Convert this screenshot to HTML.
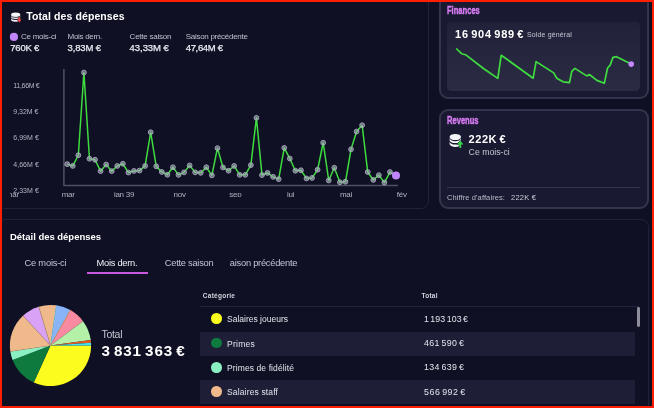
<!DOCTYPE html>
<html lang="fr"><head><meta charset="utf-8"><title>Finances</title>
<style>
html,body{margin:0;padding:0;}
body{width:654px;height:408px;overflow:hidden;background:#0f1024;position:relative;font-family:"Liberation Sans",Arial,sans-serif;}
.card{position:absolute;box-sizing:border-box;border:1px solid #212239;border-radius:8px;background:#0f1024;}
.rc{position:absolute;box-sizing:border-box;border:2px solid #34354d;border-radius:9px;background:#191a31;}
.t{position:absolute;height:20px;line-height:20px;white-space:nowrap;}
.cond{position:absolute;height:20px;line-height:20px;white-space:nowrap;font-weight:700;color:#d87cf3;transform-origin:0 50%;-webkit-text-stroke:.45px #d87cf3;}
.frame{position:absolute;left:0;top:0;width:654px;height:408px;box-sizing:border-box;border:2px solid #ff1e00;z-index:10;}
svg{position:absolute;left:0;top:0;}
.xl{top:-1.35px;font-size:8px;letter-spacing:-.25px;color:#b2b2c0;}
.row{position:absolute;left:200px;width:435px;height:24.2px;background:#1e1f36;}
.dot{position:absolute;width:10.6px;height:10.6px;border-radius:50%;left:211.1px;}
</style></head><body>
<div class="card" style="left:-3px;top:-6px;width:431.5px;height:214.5px;"></div>
<div class="card" style="left:-3px;top:219px;width:651.5px;height:200px;"></div>
<div class="rc" style="left:439px;top:-6px;width:209.5px;height:105px;"></div>
<div class="rc" style="left:439px;top:109px;width:209.5px;height:99.5px;"></div>
<div style="position:absolute;left:447px;top:22.3px;width:193.2px;height:69px;border-radius:4.5px;background:linear-gradient(180deg,#212239,#2b2c44);"></div>
<div style="position:absolute;left:447px;top:186.5px;width:193px;height:1px;background:#35364e;"></div>
<div style="position:absolute;left:200px;top:306px;width:439px;height:1px;background:#23243c;"></div>
<div class="row" style="top:331.5px"></div>
<div class="row" style="top:379.9px"></div>
<div style="position:absolute;left:86.7px;top:272px;width:61.2px;height:2px;background:#c858de;"></div>
<div style="position:absolute;left:636.8px;top:307.2px;width:2.8px;height:19.5px;border-radius:1.4px;background:#8d8d9b;"></div>
<div class="dot" style="top:313.4px;background:#fcfc1e"></div>
<div class="dot" style="top:337.9px;background:#0f7a3e"></div>
<div class="dot" style="top:362px;background:#8af0c2"></div>
<div class="dot" style="top:386.2px;background:#f0b98c"></div>
<div style="position:absolute;left:230px;top:253px;width:80px;height:20px;overflow:hidden;will-change:transform;"><span class="t" id="clipt" style="right:12.8px;top:0;font-size:9.3px;color:#c4c4d4;letter-spacing:-.25px;">Saison précédente</span></div>
<div style="position:absolute;left:0;top:186px;width:430px;height:11.45px;overflow:hidden;will-change:transform;" id="xl">
<span class="t xl" style="left:61.7px;">mar</span>
<span class="t xl" style="left:113.9px;">jan 39</span>
<span class="t xl" style="left:173.6px;">nov</span>
<span class="t xl" style="left:229.2px;">sep</span>
<span class="t xl" style="left:287px;">jui</span>
<span class="t xl" style="left:339.9px;">mai</span>
<span class="t xl" style="left:396.8px;">fév</span>
<span class="t xl" style="left:5.8px;">mar</span>
<div style="position:absolute;left:0;top:0;width:10.2px;height:20px;background:#0f1024"></div>
</div>
<svg width="654" height="408" viewBox="0 0 654 408">
<path d="M63.9,69V185.4H398" fill="none" stroke="#50505f" stroke-width="1.5"/>
<polyline points="67.2,164.15 72.77,165.95 78.33,155.25 83.9,72.55 89.46,158.75 95.03,159.75 100.59,171.15 106.16,164.55 111.72,171.15 117.28,165.95 122.85,163.75 128.42,172.55 133.98,170.95 139.55,170.55 145.11,165.95 150.68,132.25 156.24,166.35 161.81,171.95 167.37,174.75 172.94,167.25 178.5,174.85 184.06,172.35 189.63,165.45 195.19,172.35 200.76,172.85 206.32,167.25 211.89,175.35 217.46,148.15 223.02,167.45 228.59,170.75 234.15,165.95 239.72,174.85 245.28,174.85 250.85,165.15 256.41,117.85 261.98,175.05 267.54,172.95 273.11,176.85 278.67,179.15 284.24,147.85 289.8,158.55 295.37,170.75 300.93,170.25 306.5,178.45 312.06,177.95 317.62,169.75 323.19,142.75 328.75,180.45 334.32,167.75 339.88,182.25 345.45,181.75 351.01,149.35 356.58,131.55 362.14,125.25 367.71,172.05 373.28,179.95 378.84,175.15 384.41,182.55 389.97,172.05 396,175.4" fill="none" stroke="#3fdc3f" stroke-width="1.5" stroke-linejoin="round"/>
<g fill="#b4b4c8" fill-opacity=".55" stroke="#a6a6ba" stroke-width="1" stroke-opacity=".95"><circle cx="67.2" cy="164.15" r="2.4"/><circle cx="72.77" cy="165.95" r="2.4"/><circle cx="78.33" cy="155.25" r="2.4"/><circle cx="83.9" cy="72.55" r="2.4"/><circle cx="89.46" cy="158.75" r="2.4"/><circle cx="95.03" cy="159.75" r="2.4"/><circle cx="100.59" cy="171.15" r="2.4"/><circle cx="106.16" cy="164.55" r="2.4"/><circle cx="111.72" cy="171.15" r="2.4"/><circle cx="117.28" cy="165.95" r="2.4"/><circle cx="122.85" cy="163.75" r="2.4"/><circle cx="128.42" cy="172.55" r="2.4"/><circle cx="133.98" cy="170.95" r="2.4"/><circle cx="139.55" cy="170.55" r="2.4"/><circle cx="145.11" cy="165.95" r="2.4"/><circle cx="150.68" cy="132.25" r="2.4"/><circle cx="156.24" cy="166.35" r="2.4"/><circle cx="161.81" cy="171.95" r="2.4"/><circle cx="167.37" cy="174.75" r="2.4"/><circle cx="172.94" cy="167.25" r="2.4"/><circle cx="178.5" cy="174.85" r="2.4"/><circle cx="184.06" cy="172.35" r="2.4"/><circle cx="189.63" cy="165.45" r="2.4"/><circle cx="195.19" cy="172.35" r="2.4"/><circle cx="200.76" cy="172.85" r="2.4"/><circle cx="206.32" cy="167.25" r="2.4"/><circle cx="211.89" cy="175.35" r="2.4"/><circle cx="217.46" cy="148.15" r="2.4"/><circle cx="223.02" cy="167.45" r="2.4"/><circle cx="228.59" cy="170.75" r="2.4"/><circle cx="234.15" cy="165.95" r="2.4"/><circle cx="239.72" cy="174.85" r="2.4"/><circle cx="245.28" cy="174.85" r="2.4"/><circle cx="250.85" cy="165.15" r="2.4"/><circle cx="256.41" cy="117.85" r="2.4"/><circle cx="261.98" cy="175.05" r="2.4"/><circle cx="267.54" cy="172.95" r="2.4"/><circle cx="273.11" cy="176.85" r="2.4"/><circle cx="278.67" cy="179.15" r="2.4"/><circle cx="284.24" cy="147.85" r="2.4"/><circle cx="289.8" cy="158.55" r="2.4"/><circle cx="295.37" cy="170.75" r="2.4"/><circle cx="300.93" cy="170.25" r="2.4"/><circle cx="306.5" cy="178.45" r="2.4"/><circle cx="312.06" cy="177.95" r="2.4"/><circle cx="317.62" cy="169.75" r="2.4"/><circle cx="323.19" cy="142.75" r="2.4"/><circle cx="328.75" cy="180.45" r="2.4"/><circle cx="334.32" cy="167.75" r="2.4"/><circle cx="339.88" cy="182.25" r="2.4"/><circle cx="345.45" cy="181.75" r="2.4"/><circle cx="351.01" cy="149.35" r="2.4"/><circle cx="356.58" cy="131.55" r="2.4"/><circle cx="362.14" cy="125.25" r="2.4"/><circle cx="367.71" cy="172.05" r="2.4"/><circle cx="373.28" cy="179.95" r="2.4"/><circle cx="378.84" cy="175.15" r="2.4"/><circle cx="384.41" cy="182.55" r="2.4"/><circle cx="389.97" cy="172.05" r="2.4"/></g>
<circle cx="396" cy="175.4" r="4" fill="#c084fc"/>
<circle cx="13.9" cy="36.9" r="4.1" fill="#c084fc"/>
<polyline points="456.7,49 461.6,53.7 465.5,54.7 484.1,69 497.8,78.4 501.2,55.3 507.6,59.8 533.1,78.2 536.1,61.6 540,64.1 553.7,72.9 556.7,78.2 563.1,81.8 569.4,82.7 571.8,71.4 574.9,68.4 586.7,75.9 589.4,74.5 596.9,80.4 604.3,83.3 607.6,68 610.2,65.1 612.9,57.3 616.5,56.7 631.2,64.1" fill="none" stroke="#3fdc3f" stroke-width="1.7" stroke-linejoin="round" stroke-linecap="round"/>
<circle cx="631.2" cy="64.1" r="2.8" fill="#c288fc"/>
<path d="M50.5,345.5L91.10,345.50A40.6,40.6 0 0 1 33.73,382.47Z" fill="#fcfc1e"/><path d="M50.5,345.5L33.73,382.47A40.6,40.6 0 0 1 12.57,359.98Z" fill="#0f7a3e"/><path d="M50.5,345.5L12.57,359.98A40.6,40.6 0 0 1 10.34,351.43Z" fill="#8af0c2"/><path d="M50.5,345.5L10.34,351.43A40.6,40.6 0 0 1 22.97,315.66Z" fill="#f0b98c"/><path d="M50.5,345.5L22.97,315.66A40.6,40.6 0 0 1 38.77,306.63Z" fill="#d9a2f7"/><path d="M50.5,345.5L38.77,306.63A40.6,40.6 0 0 1 56.36,305.33Z" fill="#f0b98c"/><path d="M50.5,345.5L56.36,305.33A40.6,40.6 0 0 1 70.37,310.09Z" fill="#8ab4f8"/><path d="M50.5,345.5L70.37,310.09A40.6,40.6 0 0 1 83.01,321.18Z" fill="#f78aa0"/><path d="M50.5,345.5L83.01,321.18A40.6,40.6 0 0 1 90.73,340.06Z" fill="#b4f0a8"/><path d="M50.5,345.5L90.73,340.06A40.6,40.6 0 0 1 91.01,342.81Z" fill="#e8591f"/><path d="M50.5,345.5L91.01,342.81A40.6,40.6 0 0 1 91.10,345.50Z" fill="#3fe0f0"/><line x1="50.5" y1="345.5" x2="38.77" y2="306.63" stroke="#a89058" stroke-width="0.45"/><line x1="50.5" y1="345.5" x2="56.36" y2="305.33" stroke="#6cd6e6" stroke-width="0.55"/><line x1="50.5" y1="345.5" x2="70.37" y2="310.09" stroke="#dca040" stroke-width="0.6"/><line x1="50.5" y1="345.5" x2="22.97" y2="315.66" stroke="#c09a70" stroke-width="0.35"/><line x1="50.5" y1="345.5" x2="10.34" y2="351.43" stroke="#c8a070" stroke-width="0.35"/>
<!-- icon: coins with red arrow -->
<g id="ic1" transform="translate(11.1,12.6)" fill="#f4f4f8">
<ellipse cx="4.6" cy="2.2" rx="4.6" ry="2.2"/>
<path d="M0,2.9A4.6,2.2 0 0 0 9.2,2.9v1.3A4.6,2.2 0 0 1 0,4.2z"/>
<path d="M0,5.2A4.6,2.2 0 0 0 9.2,5.2v1.7A4.6,2.2 0 0 1 0,6.9z"/>
<path d="M7.3,4.4h1.7v2.5h1.4l-2.25,2.9l-2.25,-2.9h1.4z" fill="#f04646" stroke="#0f1024" stroke-width=".7" paint-order="stroke"/>
</g>
<g id="ic2" transform="translate(449.6,133.9)" fill="#f4f4f8">
<ellipse cx="5.7" cy="3.1" rx="5.7" ry="3.1"/>
<path d="M0,4.1A5.7,3.2 0 0 0 11.4,4.1v1.9A5.7,3.2 0 0 1 0,6z"/>
<path d="M0,7.5A5.7,3.2 0 0 0 11.4,7.5v2.4A5.7,3.2 0 0 1 0,9.9z"/>
<path d="M9.8,14.1v-3.6h-2.2l3.1,-3.8l3.1,3.8h-2.2v3.6z" fill="#38d64a" stroke="#191a31" stroke-width=".9" paint-order="stroke"/>
</g>
</svg>
<span class="cond" id="c1" style="left:447px;top:0.3px;font-size:11.3px;transform:scaleX(.67);">Finances</span>
<span class="cond" id="c2" style="left:447px;top:110.2px;font-size:11.3px;transform:scaleX(.67);">Revenus</span>
<div id="txt" style="position:absolute;left:0;top:0;width:654px;height:408px;will-change:transform;"><span class="t" id="t0" style="left:26.3px;top:6.2px;font-size:10.5px;font-weight:700;color:#ffffff;letter-spacing:0.093px;">Total des dépenses</span>
<span class="t" id="t1" style="left:21px;top:27px;font-size:8px;font-weight:400;color:#c0c0ce;letter-spacing:-0.261px;">Ce mois-ci</span>
<span class="t" id="t2" style="left:10.3px;top:38.3px;font-size:9.5px;font-weight:400;color:#ececf4;letter-spacing:-0.221px;-webkit-text-stroke:.25px #ececf4">760K €</span>
<span class="t" id="t3" style="left:67.6px;top:27px;font-size:8px;font-weight:400;color:#c0c0ce;letter-spacing:-0.311px;">Mois dern.</span>
<span class="t" id="t4" style="left:67.6px;top:38.3px;font-size:9.5px;font-weight:400;color:#ececf4;letter-spacing:-0.143px;-webkit-text-stroke:.25px #ececf4">3,83M €</span>
<span class="t" id="t5" style="left:129.6px;top:27px;font-size:8px;font-weight:400;color:#c0c0ce;letter-spacing:-0.233px;">Cette saison</span>
<span class="t" id="t6" style="left:129.6px;top:38.3px;font-size:9.5px;font-weight:400;color:#ececf4;letter-spacing:-0.055px;-webkit-text-stroke:.25px #ececf4">43,33M €</span>
<span class="t" id="t7" style="left:185.7px;top:27px;font-size:8px;font-weight:400;color:#c0c0ce;letter-spacing:-0.281px;">Saison précédente</span>
<span class="t" id="t8" style="left:185.7px;top:38.3px;font-size:9.5px;font-weight:400;color:#ececf4;letter-spacing:-0.335px;-webkit-text-stroke:.25px #ececf4">47,64M €</span>
<span class="t" id="t9" style="left:13.3px;top:75.8px;font-size:7px;font-weight:400;color:#b4b4c2;letter-spacing:-0.316px;">11,66M €</span>
<span class="t" id="t10" style="left:13.3px;top:102px;font-size:7px;font-weight:400;color:#b4b4c2;letter-spacing:-0.046px;">9,32M €</span>
<span class="t" id="t11" style="left:13.3px;top:128.3px;font-size:7px;font-weight:400;color:#b4b4c2;letter-spacing:0.031px;">6,99M €</span>
<span class="t" id="t12" style="left:13.3px;top:154.8px;font-size:7px;font-weight:400;color:#b4b4c2;letter-spacing:0.031px;">4,66M €</span>
<span class="t" id="t13" style="left:13.3px;top:180.5px;font-size:7px;font-weight:400;color:#b4b4c2;letter-spacing:0.031px;">2,33M €</span>
<span class="t" id="t14" style="left:455.1px;top:24.3px;font-size:11px;font-weight:700;color:#ffffff;letter-spacing:0.727px;word-spacing:-1.3px">16 904 989 €</span>
<span class="t" id="t15" style="left:527px;top:24.8px;font-size:7px;font-weight:400;color:#c4c4d0;letter-spacing:0.144px;">Solde général</span>
<span class="t" id="t16" style="left:468.6px;top:129px;font-size:11px;font-weight:700;color:#ffffff;letter-spacing:0.532px;word-spacing:-1px">222K €</span>
<span class="t" id="t17" style="left:468.6px;top:142.4px;font-size:8.8px;font-weight:400;color:#c4c4d0;letter-spacing:-0.047px;">Ce mois-ci</span>
<span class="t" id="t18" style="left:447px;top:187.7px;font-size:7.5px;font-weight:400;color:#b9b9c9;letter-spacing:0.098px;">Chiffre d'affaires:</span>
<span class="t" id="t19" style="left:511px;top:187.7px;font-size:7.5px;font-weight:400;color:#c9c9d5;letter-spacing:0.222px;">222K €</span>
<span class="t" id="t20" style="left:10px;top:226.8px;font-size:9.5px;font-weight:700;color:#ffffff;letter-spacing:-0.019px;">Détail des dépenses</span>
<span class="t" id="t21" style="left:24.5px;top:253px;font-size:9.3px;font-weight:400;color:#c4c4d4;letter-spacing:-0.201px;">Ce mois-ci</span>
<span class="t" id="t22" style="left:96.5px;top:253px;font-size:9.3px;font-weight:400;color:#f0f0f6;letter-spacing:-0.253px;">Mois dern.</span>
<span class="t" id="t23" style="left:164.8px;top:253px;font-size:9.3px;font-weight:400;color:#c4c4d4;letter-spacing:-0.26px;">Cette saison</span>
<span class="t" id="t24" style="left:202.8px;top:285.6px;font-size:6.5px;font-weight:700;color:#d4d4e0;letter-spacing:0.261px;">Catégorie</span>
<span class="t" id="t25" style="left:421.4px;top:285.6px;font-size:6.5px;font-weight:700;color:#d4d4e0;letter-spacing:0.278px;">Total</span>
<span class="t" id="t26" style="left:101.4px;top:324px;font-size:10.5px;font-weight:400;color:#c4c4d0;letter-spacing:-0.262px;">Total</span>
<span class="t" id="t27" style="left:101.4px;top:341px;font-size:15.2px;font-weight:700;color:#ffffff;letter-spacing:0.91px;word-spacing:-2px">3 831 363 €</span>
<span class="t" id="t28" style="left:227px;top:308.8px;font-size:8.5px;font-weight:400;color:#e4e4ee;letter-spacing:0.003px;">Salaires joueurs</span>
<span class="t" id="t29" style="left:227px;top:333.6px;font-size:8.5px;font-weight:400;color:#e4e4ee;letter-spacing:0.281px;">Primes</span>
<span class="t" id="t30" style="left:227px;top:357.7px;font-size:8.5px;font-weight:400;color:#e4e4ee;letter-spacing:0.103px;">Primes de fidélité</span>
<span class="t" id="t31" style="left:227px;top:381.5px;font-size:8.5px;font-weight:400;color:#e4e4ee;letter-spacing:0.149px;">Salaires staff</span>
<span class="t" id="t32" style="left:424px;top:309.2px;font-size:8.8px;font-weight:400;color:#e4e4ee;letter-spacing:0.107px;word-spacing:-1.2px">1 193 103 €</span>
<span class="t" id="t33" style="left:424px;top:333.3px;font-size:8.8px;font-weight:400;color:#e4e4ee;letter-spacing:0.382px;word-spacing:-1.2px">461 590 €</span>
<span class="t" id="t34" style="left:424px;top:357.4px;font-size:8.8px;font-weight:400;color:#e4e4ee;letter-spacing:0.382px;word-spacing:-1.2px">134 639 €</span>
<span class="t" id="t35" style="left:424px;top:381.5px;font-size:8.8px;font-weight:400;color:#e4e4ee;letter-spacing:0.559px;word-spacing:-1.2px">566 992 €</span>
</div>
<div class="frame"></div>
</body></html>
